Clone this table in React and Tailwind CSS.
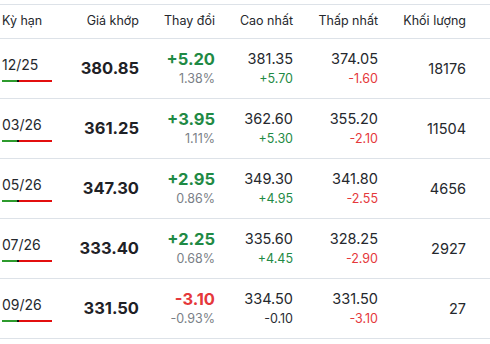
const rows = [
  { term: "12/25", price: "380.85", chg: "+5.20", pct: "1.38%", up: true, high: "381.35", highChg: "+5.70", highUp: true, low: "374.05", lowChg: "-1.60", vol: "18176" },
  { term: "03/26", price: "361.25", chg: "+3.95", pct: "1.11%", up: true, high: "362.60", highChg: "+5.30", highUp: true, low: "355.20", lowChg: "-2.10", vol: "11504" },
  { term: "05/26", price: "347.30", chg: "+2.95", pct: "0.86%", up: true, high: "349.30", highChg: "+4.95", highUp: true, low: "341.80", lowChg: "-2.55", vol: "4656" },
  { term: "07/26", price: "333.40", chg: "+2.25", pct: "0.68%", up: true, high: "335.60", highChg: "+4.45", highUp: true, low: "328.25", lowChg: "-2.90", vol: "2927" },
  { term: "09/26", price: "331.50", chg: "-3.10", pct: "-0.93%", up: false, high: "334.50", highChg: "-0.10", highUp: null, low: "331.50", lowChg: "-3.10", vol: "27" },
];

const grid = "grid grid-cols-[60px_79px_76px_78px_85px_88px] pr-[24px]";

function subColor(up) {
  if (up === true) return "text-[#1f8a45]";
  if (up === false) return "text-[#e5383b]";
  return "text-[#2a2d33]";
}

export default function App() {
  return (
    <div className="w-[490px] h-[344px] bg-white pt-[4px] text-[#25282d]" style={{ fontFamily: "Inter, 'Noto Sans', sans-serif" }}>
      <div className={`${grid} h-[35px] items-center border-y border-[#dde2e8] text-[12.5px]`}>
        <div className="pl-[2px]">Kỳ hạn</div>
        <div className="text-right">Giá khớp</div>
        <div className="text-right">Thay đổi</div>
        <div className="text-right">Cao nhất</div>
        <div className="text-right">Thấp nhất</div>
        <div className="text-right">Khối lượng</div>
      </div>

      {rows.map((r) => (
        <div key={r.term} className={`${grid} h-[60px] items-center border-b border-[#dde2e8]`}>
          <div className="pl-[2px] flex flex-col">
            <span className="text-[14px] leading-[20px]">{r.term}</span>
            <div className="mt-[5px] flex h-[2px] w-[50px]">
              <div className="w-[15px] bg-[#2d9a2d]" />
              <div className="w-[2px] bg-[#111]" />
              <div className="flex-1 bg-[#e30f0f]" />
            </div>
          </div>
          <div className="text-right text-[16.5px] font-bold text-[#1e2126]">{r.price}</div>
          <div className="flex flex-col items-end">
            <span className={`text-[16.5px] font-bold leading-[20px] ${r.up ? "text-[#1f8a45]" : "text-[#e5383b]"}`}>{r.chg}</span>
            <span className="mt-[1px] text-[12.5px] leading-[18px] text-[#7a7f87]">{r.pct}</span>
          </div>
          <div className="flex flex-col items-end">
            <span className="text-[14.5px] leading-[20px]">{r.high}</span>
            <span className={`mt-[1px] text-[12.5px] leading-[18px] ${subColor(r.highUp)}`}>{r.highChg}</span>
          </div>
          <div className="flex flex-col items-end">
            <span className="text-[14.5px] leading-[20px]">{r.low}</span>
            <span className="mt-[1px] text-[12.5px] leading-[18px] text-[#e5383b]">{r.lowChg}</span>
          </div>
          <div className="text-right text-[14.5px]">{r.vol}</div>
        </div>
      ))}
    </div>
  );
}
